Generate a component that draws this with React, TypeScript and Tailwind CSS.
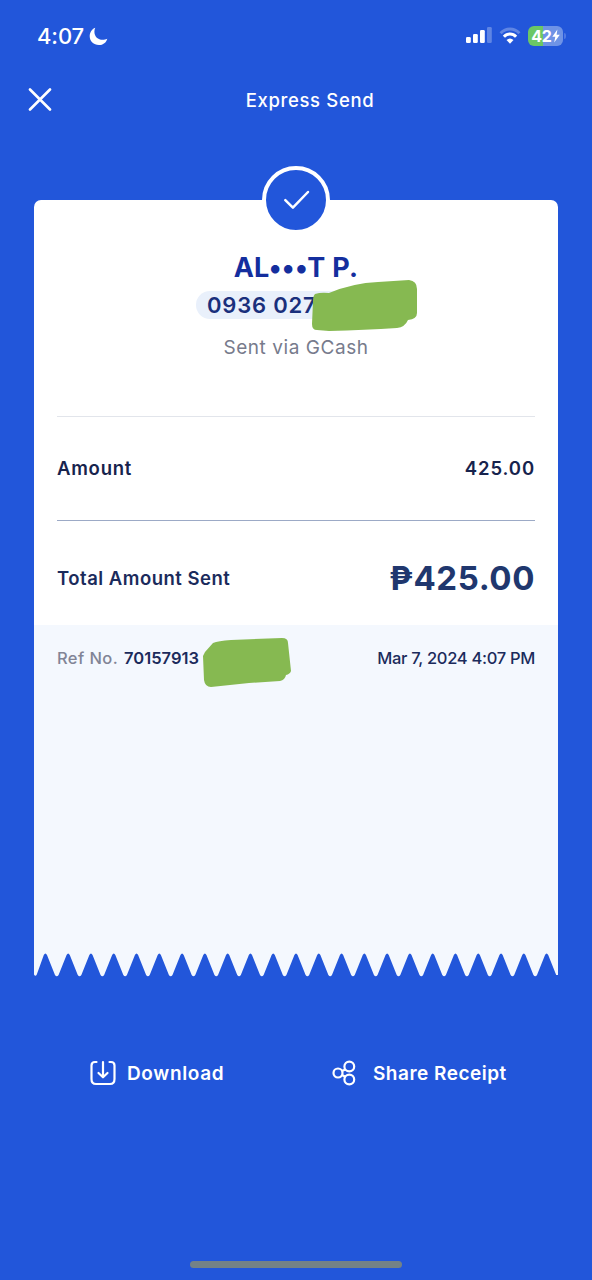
import * as React from "react"

// --- Receipt data ---
const receipt = {
  name: "AL•••T P.",
  phone: "0936 027",
  amount: "425.00",
  refNo: "70157913",
  date: "Mar 7, 2024 4:07 PM",
}

// Torn paper edge: 23 rounded teeth hanging from the card
const TEETH = 23
const CARD_WIDTH = 524

function tornEdgePath() {
  const step = CARD_WIDTH / TEETH
  let d = "M0 0V21.5Q1.4 24 2.8 21.5"
  for (let i = 0; i < TEETH; i++) {
    const x = i * step
    const mid = x + step / 2
    const end = x + step
    d += `L${mid - 1.6} 2Q${mid} -1 ${mid + 1.6} 2L${end - 1.8} 22`
    if (i < TEETH - 1) d += `Q${end} 24.5 ${end + 1.8} 22`
  }
  return d + `L${CARD_WIDTH} 22V0Z`
}

function StatusBar() {
  return (
    <div className="flex h-[72px] items-center justify-between pl-[37px] pr-[26px]">
      <div className="flex items-center gap-[5px]">
        <span className="text-[22px] font-medium leading-none tracking-[-0.1px]">4:07</span>
        <svg width="19" height="19" viewBox="0 0 19 19" fill="currentColor">
          <path d="M6.3.8C5.7 2 5.4 3.2 5.4 4.7c0 5 3.7 8.1 8.3 8.1 1.6 0 3-.3 4.6-1.1-.9 3.7-4.2 6.4-8.4 6.4C4.7 18.100.7 14.200.7 9.300.7 5.400 2.900 2.100 6.300.8Z" />
        </svg>
      </div>
      <div className="flex items-center">
        <svg width="27" height="18" viewBox="0 0 27 18" fill="currentColor">
          <rect x="1" y="10" width="4.800" height="6" rx="1.300" />
          <rect x="8" y="7" width="4.800" height="9" rx="1.300" />
          <rect x="15" y="3" width="4.800" height="13" rx="1.300" />
          <rect x="22" y="0" width="4.800" height="16" rx="1.300" opacity="0.28" />
        </svg>
        <svg className="ml-[7px]" width="22" height="18" viewBox="0 0 22 18" fill="none" stroke="currentColor" strokeWidth="3">
          <path d="M1.600 6.200C6.700.6 15.300.6 20.400 6.200" opacity="0.28" />
          <path d="M4.900 9.700C8.300 6 13.700 6 17.100 9.700" />
          <path d="M7.500 12.900Q11 9.900 14.500 12.900L11 16.800Z" fill="currentColor" stroke="none" />
        </svg>
        <div className="ml-[7px] flex h-5 w-[35px] items-center justify-center rounded-[6px] bg-linear-to-r from-[#6cc765] from-43% to-[#6f93e6] to-43%">
          <span className="text-[16px] font-bold leading-none tracking-[-0.2px]">42</span>
          <svg width="8" height="14" viewBox="0 0 8 14" fill="currentColor">
            <path d="M5.400.5L.3 7.800h3L2.200 13.500 7.800 5.800H4.600Z" />
          </svg>
        </div>
        <div className="ml-px h-[6px] w-[2px] rounded-r-full bg-[#4f78e2]" />
      </div>
    </div>
  )
}

function Header() {
  return (
    <div className="grid h-14 grid-cols-[1fr_auto_1fr] items-center pl-7">
      <button aria-label="Close" className="justify-self-start">
        <svg width="24" height="24" viewBox="0 0 24 24" fill="none" stroke="currentColor" strokeWidth="2.600" strokeLinecap="round">
          <path d="M2 1.500L22 21.500M22 1.500L2 21.500" />
        </svg>
      </button>
      <h1 className="text-[18.5px] font-medium leading-none tracking-[0.66px]">Express Send</h1>
      <span className="w-7" />
    </div>
  )
}

function CheckBadge() {
  return (
    <div className="absolute left-1/2 top-[-34px] flex size-[68px] -translate-x-1/2 items-center justify-center rounded-full border-4 border-white bg-[#2256da] text-white">
      <svg width="28" height="22" viewBox="0 0 28 22" fill="none" stroke="currentColor" strokeWidth="2.500" strokeLinecap="round" strokeLinejoin="round">
        <path d="M3.300 11.200L10.900 18.700L26 3" />
      </svg>
    </div>
  )
}

function Recipient() {
  return (
    <div className="flex h-[217px] flex-col items-center border-b border-[#e2e5eb] pt-[53px]">
      <div className="text-[27px] font-bold leading-[30px] tracking-[0.3px] text-[#142e9e]">{receipt.name}</div>
      <div className="relative mt-2 flex h-7 w-[200px] items-center rounded-full bg-[#e9f0fb] pl-[11px] text-[22px] font-semibold leading-none tracking-[0.8px] text-[#1a2f7c]">
        {receipt.phone}
        <svg className="absolute left-[115px] top-[-11px]" width="107" height="52" viewBox="0 0 107 52" fill="#86b951">
          <path d="M4 14Q10 12 18 13Q42 3 67 2L98 0Q106 1 106 9V33Q106 39 97 40Q94 47 86 48Q54 50 18 51L6 50Q1 50 1 44L2 21Q2 16 4 14Z" />
        </svg>
      </div>
      <div className="mt-[18px] text-[19px] leading-[22px] tracking-[0.55px] text-[#777b8c]">Sent via GCash</div>
    </div>
  )
}

function Receipt() {
  return (
    <div className="relative mx-[34px] mt-[72px] text-[#1b2b5c]">
      <div className="rounded-t-[7px] bg-white px-[23px]">
        <Recipient />
        <div className="flex h-[104px] items-center justify-between border-b border-[#9caac6] text-[18.5px] font-semibold leading-none text-[#17234d]">
          <span className="tracking-[0.75px]">Amount</span>
          <span className="tracking-[0.9px]">{receipt.amount}</span>
        </div>
        <div className="flex h-[104px] items-center justify-between pt-[11px]">
          <span className="text-[18.5px] font-semibold leading-none tracking-[0.5px]">Total Amount Sent</span>
          <span className="text-[33px] font-bold leading-none tracking-[0.6px] text-[#20376e]">₱{receipt.amount}</span>
        </div>
      </div>
      <div className="h-[328px] bg-[#f4f8fe] px-[23px] pt-6">
        <div className="relative flex h-[18px] items-center justify-between leading-none">
          <div className="flex items-center gap-[6px] text-[16.5px]">
            <span className="font-medium tracking-[0.4px] text-[#818496]">Ref No.</span>
            <span className="font-semibold">{receipt.refNo}</span>
          </div>
          <span className="text-[16.5px] font-medium tracking-[-0.3px]">{receipt.date}</span>
          <svg className="absolute left-[145px] top-[-11px]" width="90" height="50" viewBox="0 0 90 50" fill="#86b951">
            <path d="M3 14L11 5Q16 3 29 2L80 0Q86 0 86 5L89 33Q88 36 84 37Q83 42 78 43L47 45L9 49Q3 49 2 42L1 18Z" />
          </svg>
        </div>
      </div>
      <svg className="block h-6 w-full" viewBox="0 0 524 24" fill="#f4f8fe">
        <path d={tornEdgePath()} />
      </svg>
      <CheckBadge />
    </div>
  )
}

function DownloadIcon() {
  return (
    <svg width="26" height="26" viewBox="0 0 26 26" fill="none" stroke="currentColor" strokeWidth="2.200" strokeLinecap="round" strokeLinejoin="round">
      <path d="M6.500 2H5Q1.500 2 1.500 5.500V19Q1.500 24 6 24H20Q24.500 24 24.500 19V5.500Q24.500 2 21 2H19.500" />
      <path d="M13 2V17M8.500 13L13 17.300L17.500 13" />
    </svg>
  )
}

function ShareIcon() {
  return (
    <svg width="24" height="26" viewBox="0 0 24 26" fill="none" stroke="currentColor" strokeWidth="2.200">
      <circle cx="6" cy="13" r="4.500" />
      <circle cx="17.300" cy="6.500" r="4.900" />
      <circle cx="17.300" cy="19.500" r="4.900" />
      <path d="M10 11L13.300 9.400M10 15L13.300 16.800" />
    </svg>
  )
}

export default function App() {
  return (
    <main className="flex h-[1280px] w-[592px] flex-col bg-[#2256da] font-['Inter','Liberation_Sans',sans-serif] text-white">
      <StatusBar />
      <Header />
      <Receipt />
      <div className="mt-[82px] flex h-7 items-center pl-[90px] text-[19px] font-semibold leading-none">
        <button className="flex items-center gap-[11px]">
          <DownloadIcon />
          <span className="w-[102px] whitespace-nowrap text-left tracking-[0.65px]">Download</span>
        </button>
        <button className="ml-[103px] flex items-center gap-[17px]">
          <ShareIcon />
          <span className="whitespace-nowrap tracking-[0.5px]">Share Receipt</span>
        </button>
      </div>
      <div className="mt-auto mb-3 h-[7px] w-[212px] self-center rounded-full bg-[#748286]" />
    </main>
  )
}
